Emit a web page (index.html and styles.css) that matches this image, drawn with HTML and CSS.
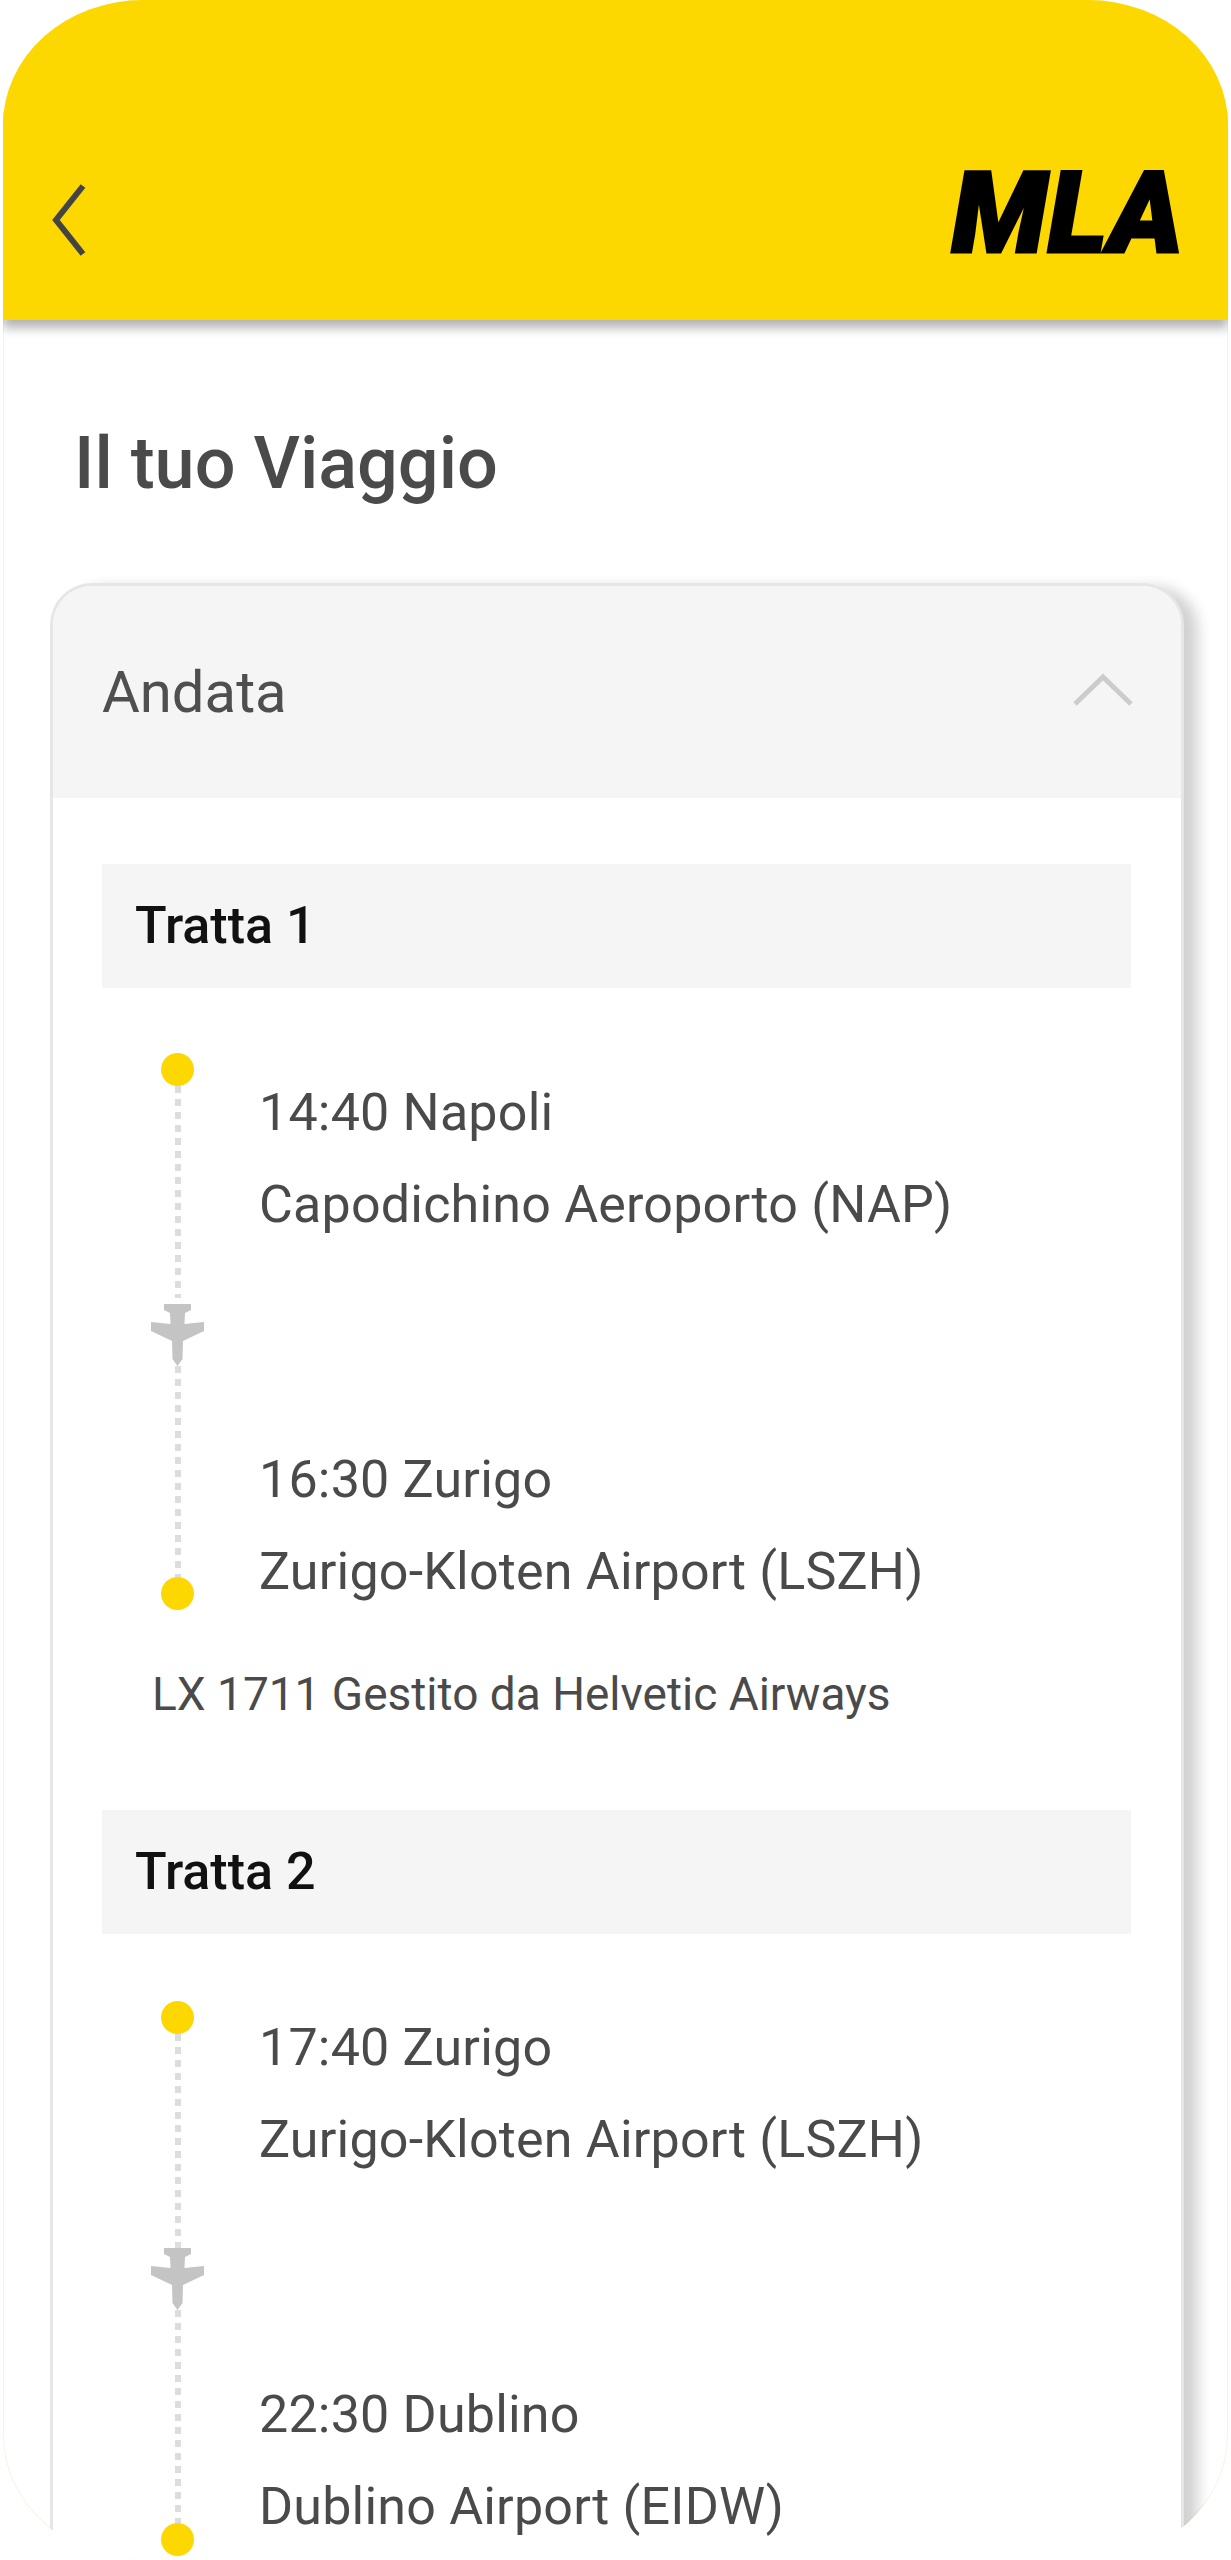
FILE: index.html
```html
<!DOCTYPE html>
<html lang="it">
<head>
<meta charset="utf-8">
<title>Il tuo Viaggio</title>
<link rel="stylesheet" href="styles.css">
</head>
<body>
<div class="phone">
  <header class="topbar">
    <svg class="back" viewBox="0 0 36 74" width="36" height="74"><path d="M32 3 L5 37 L32 71"/></svg>
    <div class="logo">MLA</div>
  </header>
  <h1 class="title">Il tuo Viaggio</h1>
  <section class="card">
    <div class="card-head">
      <span class="card-label">Andata</span>
      <svg class="chev" viewBox="0 0 62 34" width="62" height="34"><path d="M3 31 L31 4 L59 31"/></svg>
    </div>
    <div class="card-body">
      <div class="leg">
        <div class="leg-bar">Tratta 1</div>
        <div class="route">
          <div class="track">
            <span class="dot"></span><span class="dash"></span>
            <svg class="plane" viewBox="0 0 53 62" width="53" height="62"><path d="M13 0 H40 V6 L34 9 L33.500 20 L53 18 V27 L32 37 L31.500 55 L26.500 62 L21.500 55 L21 37 L0 27 V18 L19.500 20 L19 9 L13 6 Z"/></svg>
            <span class="dash"></span><span class="dot"></span>
          </div>
          <div class="stops">
            <div class="stop"><p>14:40 Napoli</p><p>Capodichino Aeroporto (NAP)</p></div>
            <div class="stop"><p>16:30 Zurigo</p><p>Zurigo-Kloten Airport (LSZH)</p></div>
          </div>
        </div>
        <p class="flight">LX 1711 Gestito da Helvetic Airways</p>
      </div>
      <div class="leg">
        <div class="leg-bar">Tratta 2</div>
        <div class="route route-second">
          <div class="track">
            <span class="dot"></span><span class="dash"></span>
            <svg class="plane" viewBox="0 0 53 62" width="53" height="62"><path d="M13 0 H40 V6 L34 9 L33.500 20 L53 18 V27 L32 37 L31.500 55 L26.500 62 L21.500 55 L21 37 L0 27 V18 L19.500 20 L19 9 L13 6 Z"/></svg>
            <span class="dash"></span><span class="dot"></span>
          </div>
          <div class="stops">
            <div class="stop"><p>17:40 Zurigo</p><p>Zurigo-Kloten Airport (LSZH)</p></div>
            <div class="stop"><p>22:30 Dublino</p><p>Dublino Airport (EIDW)</p></div>
          </div>
        </div>
      </div>
    </div>
  </section>
</div>
</body>
</html>
```
FILE: styles.css
```css
* { box-sizing: border-box; }
html, body { margin: 0; padding: 0; background: #fff; }
body { font-family: Roboto, "Liberation Sans", sans-serif; color: #4a4a4a; }
p, h1 { margin: 0; }

.phone {
  width: 1225px;
  height: 2560px;
  margin-left: 3px;
  overflow: hidden;
  background: #fff;
  border-radius: 140px / 125px;
  box-shadow: inset 0 0 0 1px #f6f4e6;
}

.topbar {
  height: 320px;
  background: #fdd800;
  box-shadow: 0 8px 10px rgba(0, 0, 0, .3);
  display: flex;
  justify-content: space-between;
  align-items: flex-start;
  padding: 0 44px 0 48px;
  position: relative;
}
.back { margin-top: 183px; fill: none; stroke: #444; stroke-width: 6; }
.logo {
  margin-top: 149px;
  font-size: 112px;
  line-height: 130px;
  font-weight: 900;
  font-style: italic;
  color: #000;
  letter-spacing: 1px;
  -webkit-text-stroke: 3px #000;
}

.title {
  font-size: 72px;
  font-weight: 500;
  line-height: 80px;
  padding: 104px 0 0 71px;
  color: #4a4a4a;
}

.card {
  margin: 79px 44px 0 47px;
  border: 3px solid #e6e6e6;
  border-bottom: 0;
  border-radius: 42px 42px 0 0;
  background: #fff;
  box-shadow: 14px 4px 14px rgba(0, 0, 0, .18);
  overflow: hidden;
}
.card-head {
  height: 212px;
  background: #f5f5f5;
  display: flex;
  justify-content: space-between;
  align-items: center;
  padding: 0 47px 0 49px;
}
.card-label { font-size: 58px; color: #4f4f4f; }
.chev { fill: none; stroke: #ccc; stroke-width: 5; margin-top: -4px; }

.card-body { padding: 66px 50px 0 49px; }
.leg { margin-bottom: 86px; }
.leg-bar {
  height: 124px;
  background: #f5f5f5;
  display: flex;
  align-items: center;
  padding: 0 0 2px 33px;
  font-size: 52px;
  font-weight: 500;
  color: #111;
}

.route { display: flex; margin-top: 65px; padding-left: 49px; }
.track {
  width: 53px;
  height: 557px;
  display: flex;
  flex-direction: column;
  align-items: center;
  flex: none;
}
.dot { width: 33px; height: 33px; border-radius: 50%; background: #fdd800; flex: none; }
.dash {
  flex: 1;
  width: 6px;
  background: repeating-linear-gradient(to bottom, #ddd 0 7px, transparent 7px 13px);
}
.plane { fill: #c4c4c4; flex: none; margin-top: 6px; }

.stops { margin-left: 55px; padding-top: 14px; }
.stop + .stop { margin-top: 183px; }
.stop p { font-size: 52px; letter-spacing: .2px; line-height: 92px; white-space: nowrap; }

.route-second { margin-top: 67px; }
.route-second .track { height: 555px; }
.route-second .plane { margin-top: 0; }
.route-second .stops { padding-top: 1px; }

.flight { font-size: 46px; line-height: 60px; margin: 46px 0 0 50px; white-space: nowrap; }
```
